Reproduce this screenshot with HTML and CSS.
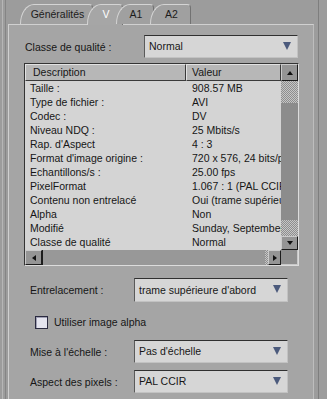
FILE: index.html
```html
<!DOCTYPE html>
<html lang="fr">
<head>
  <meta charset="UTF-8">
  <title>Propriétés du média</title>
  <link rel="stylesheet" href="styles.css">
</head>
<body>
  <div class="window">
    <div class="tabs">
      <span class="tab tab-gen">Généralités</span>
      <span class="tab tab-v active">V</span>
      <span class="tab tab-a1">A1</span>
      <span class="tab tab-a2">A2</span>
    </div>

    <div class="panel">
      <div class="field top">
        <span class="label">Classe de qualité :</span>
        <div class="combo">Normal<i class="arrow"></i></div>
      </div>

      <!-- Liste des propriétés -->
      <div class="list">
        <div class="th desc">Description</div>
        <div class="th val">Valeur</div>
        <div class="vbar">
          <div class="sbtn up"><i class="tri-up"></i></div>
          <div class="dither t1"></div>
          <div class="thumb-v"></div>
          <div class="dither t2"></div>
          <div class="sbtn down"><i class="tri-down"></i></div>
        </div>
        <div class="col desc">
          <div class="cell">Taille :</div>
          <div class="cell">Type de fichier :</div>
          <div class="cell">Codec :</div>
          <div class="cell">Niveau NDQ :</div>
          <div class="cell">Rap. d'Aspect</div>
          <div class="cell">Format d'image origine :</div>
          <div class="cell">Echantillons/s :</div>
          <div class="cell">PixelFormat</div>
          <div class="cell">Contenu non entrelacé</div>
          <div class="cell">Alpha</div>
          <div class="cell">Modifié</div>
          <div class="cell">Classe de qualité</div>
        </div>
        <div class="col val">
          <div class="cell">908.57 MB</div>
          <div class="cell">AVI</div>
          <div class="cell">DV</div>
          <div class="cell">25 Mbits/s</div>
          <div class="cell">4 : 3</div>
          <div class="cell">720 x 576, 24 bits/pixel</div>
          <div class="cell">25.00 fps</div>
          <div class="cell">1.067 : 1 (PAL CCIR)</div>
          <div class="cell">Oui (trame supérieure d'abord)</div>
          <div class="cell">Non</div>
          <div class="cell">Sunday, September 12</div>
          <div class="cell">Normal</div>
        </div>
        <div class="hbar">
          <div class="sbtn left"><i class="tri-left"></i></div>
          <div class="thumb-h"></div>
          <div class="dither t3"></div>
          <div class="sbtn right"><i class="tri-right"></i></div>
        </div>
        <div class="corner"></div>
      </div>

      <div class="field low f-entre">
        <span class="label">Entrelacement :</span>
        <div class="combo">trame supérieure d'abord<i class="arrow"></i></div>
      </div>

      <div class="checkrow">
        <span class="check"></span>
        <span>Utiliser image alpha</span>
      </div>

      <div class="field low f-mise">
        <span class="label">Mise à l'échelle :</span>
        <div class="combo">Pas d'échelle<i class="arrow"></i></div>
      </div>

      <div class="field low f-aspect">
        <span class="label">Aspect des pixels :</span>
        <div class="combo">PAL CCIR<i class="arrow"></i></div>
      </div>
    </div>
  </div>
</body>
</html>
```

FILE: styles.css
```css
body {
  margin: 0;
  width: 327px;
  height: 399px;
  overflow: hidden;
  background: #9c9c9c;
  font-family: "Liberation Sans", Arial, sans-serif;
  font-size: 10.5px;
  color: #161616;
}

.window {
  height: 399px;
  padding-left: 8px;
  background:
    linear-gradient(to right,
      transparent 2px, #b6b6b6 2px 3px,
      transparent 3px 5px, #858585 5px 6px,
      transparent 6px 318px, #7e7e7e 318px 319px,
      transparent 319px);
}

/* Onglets */
.tabs {
  display: flex;
  height: 20px;
  padding: 4px 0 0 12px;
}

.tab {
  position: relative;
  box-sizing: border-box;
  height: 20px;
  padding-left: 2px;
  border: 1px solid #d4d4d4;
  border-bottom: none;
  border-right-color: #727272;
  border-radius: 14px 4px 0 0 / 20px 4px 0 0;
  background: #a0a0a0;
  line-height: 18px;
  text-align: center;
  color: #1c1c1c;
}

.tab-gen { width: 73px; }
.tab-v { width: 36px; margin-left: -6px; }
.tab-a1 { width: 38px; margin-left: -7px; }
.tab-a2 { width: 41px; margin-left: -4px; }

.tab.active {
  height: 21px;
  margin-bottom: -1px;
  background: #a6a6a6;
  color: #ffffff;
}

/* Panneau */
.panel {
  height: 380px;
  margin-right: 13px;
  padding: 10px 14px 0 15px;
  border-top: 1px solid #d0d0d0;
  border-left: 1px solid #d0d0d0;
  border-right: 1px solid #bdbdbd;
  background: #a5a5a5;
}

.field {
  display: flex;
  align-items: center;
}

.field .label {
  flex: 1;
}

.field.top {
  padding-left: 1px;
}

.field.low {
  padding-left: 6px;
  padding-right: 11px;
}

.combo {
  position: relative;
  box-sizing: border-box;
  width: 154px;
  height: 23px;
  padding-left: 4px;
  line-height: 21px;
  background: #d6d6d6;
  border-top: 1px solid #303030;
  border-left: 1px solid #5a5a5a;
  border-bottom: 1px solid #c2c2c2;
  border-right: 1px solid #c2c2c2;
  white-space: nowrap;
  overflow: hidden;
}

.field.top .combo {
  margin-right: 1px;
}

.field.low .combo {
  padding-left: 4px;
}

.arrow {
  position: absolute;
  right: 6px;
  top: 6px;
  width: 0;
  height: 0;
  border-left: 4.5px solid transparent;
  border-right: 4.5px solid transparent;
  border-top: 8px solid #4b5a7c;
}

/* Liste */
.list {
  display: grid;
  grid-template-columns: 161px 95px 17px;
  grid-template-rows: 17px 169px 15px;
  width: 273px;
  margin-top: 5px;
  border: 1px solid;
  border-color: #343434 #dcdcdc #dcdcdc #343434;
  background: #d4d4d4;
}

.th {
  box-sizing: border-box;
  background: #b7b7b7;
  border-top: 1px solid #e2e2e2;
  border-left: 1px solid #e2e2e2;
  border-right: 1px solid #3a3a3a;
  border-bottom: 1px solid #3a3a3a;
  line-height: 15px;
  white-space: nowrap;
}

.th.desc { padding-left: 7px; }
.th.val { padding-left: 5px; }

.col {
  overflow: hidden;
}

.col.desc { padding-left: 5px; }
.col.val { padding-left: 6px; }

.cell {
  height: 13px;
  line-height: 13px;
  margin-top: 1px;
  white-space: nowrap;
}

.vbar {
  grid-column: 3;
  grid-row: 1 / 3;
  display: flex;
  flex-direction: column;
}

.sbtn {
  box-sizing: border-box;
  display: flex;
  align-items: center;
  justify-content: center;
  background: #959595;
  border-top: 1px solid #cacaca;
  border-left: 1px solid #cacaca;
  border-right: 1px solid #1c1c1c;
  border-bottom: 1px solid #1c1c1c;
}

.sbtn.up { height: 17px; }
.sbtn.down { height: 14px; }
.sbtn.left { width: 17px; }
.sbtn.right { width: 13px; }

.tri-up, .tri-down, .tri-left, .tri-right {
  width: 0;
  height: 0;
}

.tri-up {
  border-left: 3.5px solid transparent;
  border-right: 3.5px solid transparent;
  border-bottom: 4px solid #111;
}

.tri-down {
  border-left: 3.5px solid transparent;
  border-right: 3.5px solid transparent;
  border-top: 4px solid #111;
}

.tri-left {
  border-top: 3.5px solid transparent;
  border-bottom: 3.5px solid transparent;
  border-right: 4px solid #111;
}

.tri-right {
  border-top: 3.5px solid transparent;
  border-bottom: 3.5px solid transparent;
  border-left: 4px solid #111;
}

.dither {
  background: repeating-conic-gradient(#c6c6c6 0 25%, #8e8e8e 0 50%) 0 0 / 2px 2px;
}

.dither.t1 { height: 22px; }
.dither.t2 { height: 16px; }
.dither.t3 { width: 3px; }

.thumb-v {
  flex: 1;
  background: #8c8c8c;
}

.hbar {
  grid-column: 1 / 3;
  grid-row: 3;
  display: flex;
}

.thumb-h {
  flex: 1;
  background: #989898;
  border-left: 1px solid #1c1c1c;
}

.corner {
  box-sizing: border-box;
  background: #8f8f8f;
  border-right: 1px solid #c8c8c8;
  border-bottom: 1px solid #c8c8c8;
}

/* Champs du bas */
.f-entre { margin-top: 12px; }
.f-mise { margin-top: 11px; }
.f-aspect { margin-top: 7px; }

.f-entre .combo { height: 24px; line-height: 22px; }

.checkrow {
  display: flex;
  align-items: center;
  gap: 6px;
  margin-top: 13px;
  padding-left: 11px;
  height: 14px;
}

.check {
  box-sizing: border-box;
  width: 13px;
  height: 13px;
  border: 1px solid #2a2a40;
  background: #e4e4ee;
  box-shadow: inset 1px 1px 0 #a0a0b4;
}
```
